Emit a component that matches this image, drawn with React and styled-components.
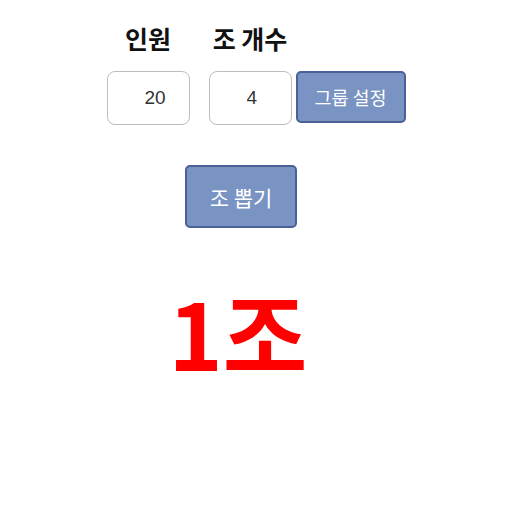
import React, { useState } from "react";
import styled, { createGlobalStyle } from "styled-components";

const GlobalStyle = createGlobalStyle`
  body {
    margin: 0;
    background: #fff;
    font-family: "Noto Sans CJK KR", "Noto Sans", sans-serif;
  }
`;

function App() {
  const [people, setPeople] = useState(20);
  const [groups, setGroups] = useState(4);
  return (
    <Page>
      <GlobalStyle />
      <Setup>
        <Field>
          <Label>인원</Label>
          <NumberInput
            type="number"
            value={people}
            onChange={(e) => setPeople(e.target.value)}
          />
        </Field>
        <Field>
          <Label>조 개수</Label>
          <NumberInput
            type="number"
            value={groups}
            onChange={(e) => setGroups(e.target.value)}
          />
        </Field>
        <SetButton>그룹 설정</SetButton>
      </Setup>
      <DrawButton>조 뽑기</DrawButton>
      <Result>1조</Result>
    </Page>
  );
}

const Page = styled.div`
  width: 508px;
  display: flex;
  flex-direction: column;
  align-items: center;
  padding-top: 20px;
`;

const Setup = styled.div`
  display: flex;
  align-items: flex-end;
  gap: 19px;
  margin-left: 4px;
`;

const Field = styled.div`
  display: flex;
  flex-direction: column;
  align-items: center;
  gap: 11px;
`;

const Label = styled.div`
  font-size: 25px;
  font-weight: 700;
  color: #111;
  line-height: 40px;
  margin-top: -2px;
  padding-bottom: 2px;
`;

const NumberInput = styled.input`
  box-sizing: border-box;
  width: 83px;
  height: 54px;
  border: 1px solid #bdbdbd;
  border-radius: 8px;
  padding: 0 0 0 37px;
  font-family: "Liberation Sans", Arial, sans-serif;
  font-size: 19px;
  color: #333;
  outline: none;
  -moz-appearance: textfield;
  &::-webkit-inner-spin-button,
  &::-webkit-outer-spin-button {
    -webkit-appearance: none;
    margin: 0;
  }
`;

const BlueButton = styled.button`
  box-sizing: border-box;
  background: #7993c2;
  border: 2px solid #4b5f98;
  border-radius: 5px;
  color: #fff;
  font-family: "Noto Sans CJK KR", "Noto Sans", sans-serif;
  cursor: pointer;
`;

const SetButton = styled(BlueButton)`
  width: 110px;
  height: 52px;
  font-size: 18.5px;
  padding: 0;
  margin-left: -15px;
  margin-bottom: 2px;
`;

const DrawButton = styled(BlueButton)`
  width: 112px;
  height: 63px;
  font-size: 21px;
  padding: 0;
  margin-top: 40px;
  margin-right: 26px;
`;

const Result = styled.div`
  margin-top: 48px;
  margin-right: 32px;
  font-size: 92px;
  font-weight: 700;
  color: #ff0000;
  line-height: 110px;
`;

export default App;
